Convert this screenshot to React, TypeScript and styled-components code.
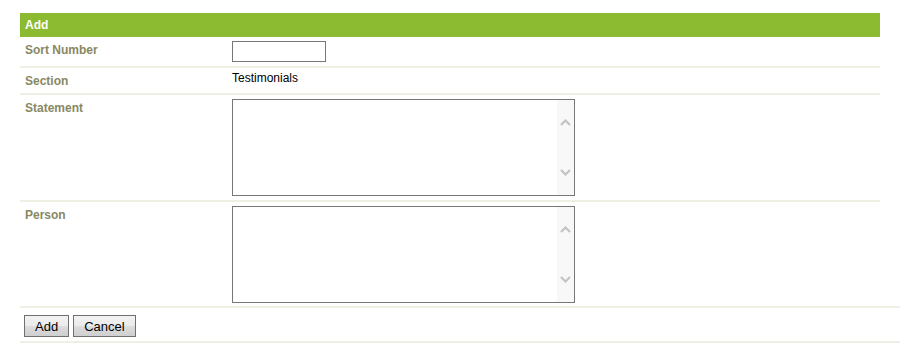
import React from "react";
import styled, { createGlobalStyle } from "styled-components";

const GlobalStyle = createGlobalStyle`
    html, body {
        margin: 0;
        padding: 0;
        background: #ffffff;
    }
    body {
        font-family: "Liberation Sans", Arial, sans-serif;
        font-size: 12px;
    }
`;

const Colors = {
    Green: "#8cbb31",
    Label: "#888863",
    Line: "#efefe3",
    Border: "#777777",
    Track: "#f8f8f8",
    Arrow: "#c3c3c3"
};

const Page = styled.div`
    padding: 13px 0 0 20px;
    width: 880px;
`;

const Form = styled.div`
    width: 860px;
`;

const Header = styled.div`
    background-color: ${Colors.Green};
    color: #ffffff;
    font-weight: bold;
    font-size: 12px;
    line-height: 24px;
    height: 24px;
    padding-left: 5px;
`;

const Row = styled.div<{ $last?: boolean }>`
    display: grid;
    grid-template-columns: 212px 1fr;
    align-items: start;
    border-bottom: ${(p) => (p.$last ? "none" : `2px solid ${Colors.Line}`)};
`;

const Label = styled.div`
    color: ${Colors.Label};
    font-weight: bold;
    font-size: 12px;
    line-height: 15px;
    padding: 6px 5px 4px;
`;

const Value = styled.div<{ $text?: boolean; $last?: boolean }>`
    padding: ${(p) => (p.$text ? "3px 0 7px" : p.$last ? "4px 0 3px" : "4px 0")};
    line-height: 15px;
    color: #000000;
    font-size: 12px;
`;

const TextInput = styled.input`
    display: block;
    box-sizing: border-box;
    width: 94px;
    height: 21px;
    border: 1px solid ${Colors.Border};
    margin: 0;
    padding: 0 2px;
    font-family: "Liberation Sans", Arial, sans-serif;
    font-size: 12px;
    outline: none;
`;

const AreaBox = styled.div`
    display: flex;
    box-sizing: border-box;
    width: 343px;
    height: 97px;
    border: 1px solid ${Colors.Border};
    background: #ffffff;
`;

const Area = styled.textarea`
    flex: 1;
    border: none;
    margin: 0;
    padding: 2px;
    resize: none;
    outline: none;
    overflow: hidden;
    font-family: "Liberation Sans", Arial, sans-serif;
    font-size: 12px;
`;

const Track = styled.div`
    width: 17px;
    background: ${Colors.Track};
    display: flex;
    flex-direction: column;
    justify-content: space-between;
    align-items: center;
    padding: 19px 0 19px;
`;

const Actions = styled.div`
    display: flex;
    gap: 4px;
    width: 876px;
    padding: 7px 0 4px 4px;
    border-top: 2px solid ${Colors.Line};
    border-bottom: 2px solid ${Colors.Line};
`;

const Button = styled.button`
    height: 22px;
    padding: 0 10px;
    border: 1px solid #707070;
    border-radius: 0;
    background: linear-gradient(#f2f2f2, #ebebeb 50%, #dddddd 51%, #cfcfcf);
    font-family: "Liberation Sans", Arial, sans-serif;
    font-size: 13px;
    color: #000000;
`;

const Chevron = ({ up }: { up?: boolean }) => (
    <svg width="11" height="7" viewBox="0 0 11 7">
        <path
            d={up ? "M1 6 L5.5 1.5 L10 6" : "M1 1 L5.5 5.5 L10 1"}
            fill="none"
            stroke={Colors.Arrow}
            strokeWidth="2.2"
        />
    </svg>
);

const TextArea = () => (
    <AreaBox>
        <Area />
        <Track>
            <Chevron up />
            <Chevron />
        </Track>
    </AreaBox>
);

const App: React.FunctionComponent = () => {
    return (
        <>
            <GlobalStyle />
            <Page>
                <Form>
                    <Header>Add</Header>
                    <Row>
                        <Label>Sort Number</Label>
                        <Value>
                            <TextInput type="text" />
                        </Value>
                    </Row>
                    <Row>
                        <Label>Section</Label>
                        <Value $text>Testimonials</Value>
                    </Row>
                    <Row>
                        <Label>Statement</Label>
                        <Value>
                            <TextArea />
                        </Value>
                    </Row>
                    <Row $last>
                        <Label>Person</Label>
                        <Value $last>
                            <TextArea />
                        </Value>
                    </Row>
                </Form>
                <Actions>
                    <Button>Add</Button>
                    <Button>Cancel</Button>
                </Actions>
            </Page>
        </>
    );
};

export default App;
